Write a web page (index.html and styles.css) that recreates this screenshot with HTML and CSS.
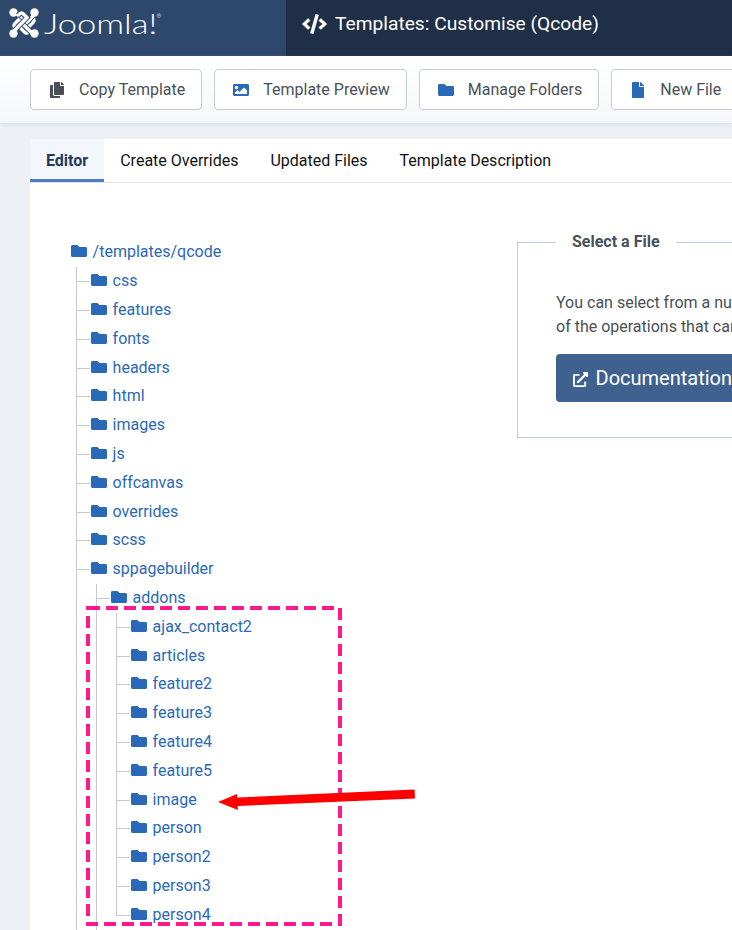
FILE: index.html
```html
<!DOCTYPE html>
<html lang="en">
<head>
<meta charset="utf-8">
<title>Templates: Customise (Qcode)</title>
<link rel="stylesheet" href="styles.css">
</head>
<body>
<svg class="defs" width="0" height="0" aria-hidden="true">
  <symbol id="i-folder" viewBox="0 0 512 512"><path d="M464 128H272l-64-64H48C21.49 64 0 85.49 0 112v288c0 26.51 21.49 48 48 48h416c26.51 0 48-21.49 48-48V176c0-26.51-21.49-48-48-48z"/></symbol>
  <symbol id="i-code" viewBox="0 0 640 512"><path d="M278.9 511.5l-61-17.7c-6.4-1.8-10-8.5-8.2-14.9L346.2 8.7c1.8-6.4 8.5-10 14.9-8.2l61 17.7c6.4 1.8 10 8.5 8.2 14.9L293.8 503.3c-1.9 6.4-8.5 10.1-14.9 8.2zm-114-112.2l43.5-46.4c4.6-4.9 4.3-12.7-.8-17.2L117 256l90.6-79.7c5.1-4.5 5.5-12.3.8-17.2l-43.5-46.4c-4.5-4.8-12.1-5.1-17-.5L3.8 247.2c-5.1 4.7-5.1 12.8 0 17.5l144.1 135.1c4.9 4.6 12.5 4.4 17-.5zm327.2.6l144.1-135.1c5.1-4.7 5.1-12.8 0-17.5L492.1 112.1c-4.8-4.5-12.4-4.3-17 .5L431.6 159c-4.6 4.9-4.3 12.7.8 17.2L523 256l-90.6 79.7c-5.1 4.5-5.5 12.3-.8 17.2l43.5 46.4c4.5 4.9 12.1 5.1 17 .6z"/></symbol>
  <symbol id="i-copy" viewBox="0 0 448 512"><path d="M320 448v40c0 13.255-10.745 24-24 24H24c-13.255 0-24-10.745-24-24V120c0-13.255 10.745-24 24-24h72v296c0 30.879 25.121 56 56 56h168zm0-344V0H152c-13.255 0-24 10.745-24 24v368c0 13.255 10.745 24 24 24h272c13.255 0 24-10.745 24-24V128H344c-13.2 0-24-10.8-24-24zm120.971-31.029L375.029 7.029A24 24 0 0 0 358.059 0H352v96h96v-6.059a24 24 0 0 0-7.029-16.97z"/></symbol>
  <symbol id="i-image" viewBox="0 0 512 512"><path d="M464 448H48c-26.51 0-48-21.49-48-48V112c0-26.51 21.49-48 48-48h416c26.51 0 48 21.49 48 48v288c0 26.51-21.49 48-48 48zM112 120c-30.928 0-56 25.072-56 56s25.072 56 56 56 56-25.072 56-56-25.072-56-56-56zM64 384h384V272l-87.515-87.515c-4.686-4.686-12.284-4.686-16.971 0L208 320l-55.515-55.515c-4.686-4.686-12.284-4.686-16.971 0L64 336v48z"/></symbol>
  <symbol id="i-file" viewBox="0 0 384 512"><path d="M224 136V0H24C10.7 0 0 10.7 0 24v464c0 13.3 10.7 24 24 24h336c13.3 0 24-10.7 24-24V160H248c-13.2 0-24-10.8-24-24zm160-14.1v6.1H256V0h6.1c6.4 0 12.5 2.5 17 7l97.9 98c4.5 4.5 7 10.6 7 16.9z"/></symbol>
  <symbol id="i-ext" viewBox="0 0 512 512"><path d="M432 320h-32a16 16 0 0 0-16 16v112H64V128h144a16 16 0 0 0 16-16V80a16 16 0 0 0-16-16H48a48 48 0 0 0-48 48v352a48 48 0 0 0 48 48h352a48 48 0 0 0 48-48V336a16 16 0 0 0-16-16zM488 0H360c-21.37 0-32.05 25.91-17 41l35.73 35.73L135 320.37a24 24 0 0 0 0 34L157.67 377a24 24 0 0 0 34 0l243.61-243.68L471 169c15 15 41 4.5 41-17V24a24 24 0 0 0-24-24z"/></symbol>
  <symbol id="i-hook" viewBox="0 0 30 30"><path class="hook-gap" d="M8 6 L20.5 18 L24 14.5 Q26 12.5 24 10.5 L22.5 9"/><path class="hook-line" d="M4.5 4.5 L8 6 L20.5 18 L24 14.5 Q26 12.5 24 10.5 L22.5 9"/><circle class="hook-end" cx="4.5" cy="4.5" r="4.2"/></symbol>
</svg>

<header class="topbar">
  <div class="brand">
    <svg class="brand-mark" viewBox="0 0 30 30" aria-hidden="true">
      <use href="#i-hook" width="30" height="30"/>
      <use href="#i-hook" width="30" height="30" transform="rotate(90 15 15)"/>
      <use href="#i-hook" width="30" height="30" transform="rotate(180 15 15)"/>
      <use href="#i-hook" width="30" height="30" transform="rotate(270 15 15)"/>
    </svg>
    <span class="brand-name">Joomla!</span><sup class="brand-reg">®</sup>
  </div>
  <div class="page-title">
    <svg class="title-icon"><use href="#i-code"/></svg>
    <h1>Templates: Customise (Qcode)</h1>
  </div>
</header>

<nav class="toolbar">
  <button class="tool"><span class="tool-icon"><svg class="ico-copy"><use href="#i-copy"/></svg></span>Copy Template</button>
  <button class="tool"><span class="tool-icon"><svg class="ico-blue"><use href="#i-image"/></svg></span>Template Preview</button>
  <button class="tool"><span class="tool-icon"><svg class="ico-blue"><use href="#i-folder"/></svg></span>Manage Folders</button>
  <button class="tool"><span class="tool-icon"><svg class="ico-file"><use href="#i-file"/></svg></span>New File</button>
</nav>

<main class="content">
  <section class="card">
    <div class="tabs">
      <a class="tab active">Editor</a>
      <a class="tab">Create Overrides</a>
      <a class="tab">Updated Files</a>
      <a class="tab">Template Description</a>
    </div>
    <div class="panel">
      <div class="tree-col">
        <div class="node root"><svg class="folder"><use href="#i-folder"/></svg><a>/templates/qcode</a></div>
        <ul class="tree open">
          <li class="node"><svg class="folder"><use href="#i-folder"/></svg><a>css</a></li>
          <li class="node"><svg class="folder"><use href="#i-folder"/></svg><a>features</a></li>
          <li class="node"><svg class="folder"><use href="#i-folder"/></svg><a>fonts</a></li>
          <li class="node"><svg class="folder"><use href="#i-folder"/></svg><a>headers</a></li>
          <li class="node"><svg class="folder"><use href="#i-folder"/></svg><a>html</a></li>
          <li class="node"><svg class="folder"><use href="#i-folder"/></svg><a>images</a></li>
          <li class="node"><svg class="folder"><use href="#i-folder"/></svg><a>js</a></li>
          <li class="node"><svg class="folder"><use href="#i-folder"/></svg><a>offcanvas</a></li>
          <li class="node"><svg class="folder"><use href="#i-folder"/></svg><a>overrides</a></li>
          <li class="node"><svg class="folder"><use href="#i-folder"/></svg><a>scss</a></li>
          <li class="node"><svg class="folder"><use href="#i-folder"/></svg><a>sppagebuilder</a>
            <ul class="tree open">
              <li class="node"><svg class="folder"><use href="#i-folder"/></svg><a>addons</a>
                <ul class="tree">
                  <li class="node"><svg class="folder"><use href="#i-folder"/></svg><a>ajax_contact2</a></li>
                  <li class="node"><svg class="folder"><use href="#i-folder"/></svg><a>articles</a></li>
                  <li class="node"><svg class="folder"><use href="#i-folder"/></svg><a>feature2</a></li>
                  <li class="node"><svg class="folder"><use href="#i-folder"/></svg><a>feature3</a></li>
                  <li class="node"><svg class="folder"><use href="#i-folder"/></svg><a>feature4</a></li>
                  <li class="node"><svg class="folder"><use href="#i-folder"/></svg><a>feature5</a></li>
                  <li class="node"><svg class="folder"><use href="#i-folder"/></svg><a>image</a></li>
                  <li class="node"><svg class="folder"><use href="#i-folder"/></svg><a>person</a></li>
                  <li class="node"><svg class="folder"><use href="#i-folder"/></svg><a>person2</a></li>
                  <li class="node"><svg class="folder"><use href="#i-folder"/></svg><a>person3</a></li>
                  <li class="node"><svg class="folder"><use href="#i-folder"/></svg><a>person4</a></li>
                </ul>
              </li>
            </ul>
          </li>
        </ul>
      </div>
      <fieldset class="info">
        <legend>Select a File</legend>
        <p>You can select from a number of files in the tree to edit them or use any<br>of the operations that can be performed from the toolbar above.</p>
        <a class="doc-btn"><svg class="ext"><use href="#i-ext"/></svg>Documentation</a>
      </fieldset>
    </div>
  </section>
</main>

<svg class="annotation" viewBox="0 0 732 930" aria-hidden="true">
  <rect class="anno-box" x="88" y="608" width="252" height="316"/>
  <path class="anno-arrow" d="M218 802 L237 794 L237.3 797.6 L414.6 789.5 L415 798.5 L237.7 806 L238 810 Z"/>
</svg>
</body>
</html>
```

FILE: styles.css
```css
* { box-sizing: border-box; }
html, body { margin: 0; height: 930px; overflow: hidden; }
body {
  position: relative;
  background: #edf1f6;
  font-family: Roboto, "Liberation Sans", sans-serif;
  font-size: 16px;
  color: #495057;
}
.defs { position: absolute; }
svg { fill: currentColor; display: block; }

.topbar { display: flex; height: 56px; color: #fff; }
.brand {
  width: 286px;
  background: #2e486c;
  display: flex;
  align-items: flex-start;
  padding: 8px 0 0 9px;
}
.brand-mark { width: 30px; height: 30px; flex: none; overflow: visible; }
.hook-gap { fill: none; stroke: #2e486c; stroke-width: 5.4; }
.hook-line { fill: none; stroke: #fff; stroke-width: 3.4; }
.hook-end { fill: #fff; }
.brand-name {
  font-family: Lato, sans-serif;
  font-weight: 300;
  font-size: 27px;
  line-height: 36px;
  margin: -2.5px 24px 0 5px;
  transform: scaleX(1.28);
  transform-origin: left center;
}
.brand-reg { font-size: 6px; line-height: 1; margin-top: 5px; opacity: .7; }
.page-title {
  flex: 1;
  background: #1f2f47;
  display: flex;
  align-items: center;
  padding: 0 0 8px 16px;
  gap: 8px;
}
.title-icon { width: 25px; height: 20px; }
.page-title h1 { margin: 0; font-size: 19.2px; font-weight: 400; line-height: 24px; white-space: nowrap; }

.toolbar {
  display: flex;
  gap: 12px;
  height: 67px;
  padding: 13px 0 13px 30px;
  overflow: hidden;
  background: linear-gradient(#fff, #f5f7fa);
  box-shadow: 0 1px 5px rgba(100, 120, 150, .18);
  position: relative;
}
.tool {
  flex: none;
  display: flex;
  align-items: center;
  height: 41px;
  padding: 0 16px;
  border: 1px solid #c6cdd8;
  border-radius: 4px;
  background: #fff;
  color: #495057;
  font: 400 16px/24px Roboto, sans-serif;
}
.tool-icon { width: 20px; margin-right: 12px; display: flex; justify-content: center; }
.ico-copy { width: 14px; height: 16px; color: #495057; }
.ico-blue { width: 16px; height: 16px; color: #2a69b8; }
.ico-file { width: 12px; height: 16px; color: #2a69b8; }

.content { padding: 16px 0 0 30px; }
.card { width: 760px; height: 800px; background: #fff; }
.tabs { display: flex; height: 44px; border-bottom: 1px solid #dfe3ec; }
.tab { padding: 0 16px; line-height: 43px; color: #111; height: 43px; white-space: nowrap; }
.tab.active { font-weight: 700; background: #f3f6fa; color: #1f3a5f; border-bottom: 3px solid #4f7cbb; }

.panel { display: flex; padding: 55.4px 0 0 41px; }
.tree-col { width: 446px; flex: none; }
.tree, .tree ul { list-style: none; margin: 0; padding: 0; }
.tree { position: relative; }
.tree::before {
  content: "";
  position: absolute;
  left: 5px;
  top: 0;
  bottom: 14px;
  border-left: 1px solid #c8c8c8;
}
.tree.open { padding-bottom: 30px; margin-bottom: -30px; }
.tree.open::before { bottom: 0; }
.node { line-height: 28.8px; }
.tree > .node { position: relative; padding-left: 20px; }
.tree > .node::before {
  content: "";
  position: absolute;
  left: 5px;
  top: 14px;
  width: 14px;
  border-top: 1px solid #c8c8c8;
}
.folder {
  display: inline-block;
  vertical-align: -2px;
  width: 16px;
  height: 16px;
  margin-right: 5.6px;
  color: #2a69b8;
}
.node a { color: #2a69b8; }

.info {
  flex: none;
  width: 620px;
  height: 208px;
  margin: -8.4px 0 0;
  padding: 0 0 0 38px;
  border: 1px solid #c0cde0;
  min-width: 0;
}
.info legend {
  padding: 0 16px;
  font-weight: 700;
  line-height: 24px;
  color: #495057;
}
.info p { margin: 37px 0 15px; line-height: 24px; white-space: nowrap; color: #495057; }
.doc-btn {
  display: inline-flex;
  align-items: center;
  height: 48px;
  padding: 0 16.5px;
  border-radius: 4px;
  background: #3f618f;
  color: #fff;
  font-size: 20px;
}
.ext { width: 15px; height: 15px; margin-right: 8px; margin-top: 3px; }

.annotation { position: absolute; left: 0; top: 0; width: 732px; height: 930px; pointer-events: none; }
.anno-box { fill: none; stroke: #ff1a8c; stroke-width: 4; stroke-dasharray: 12 6; }
.anno-arrow { fill: #f00; }
```
